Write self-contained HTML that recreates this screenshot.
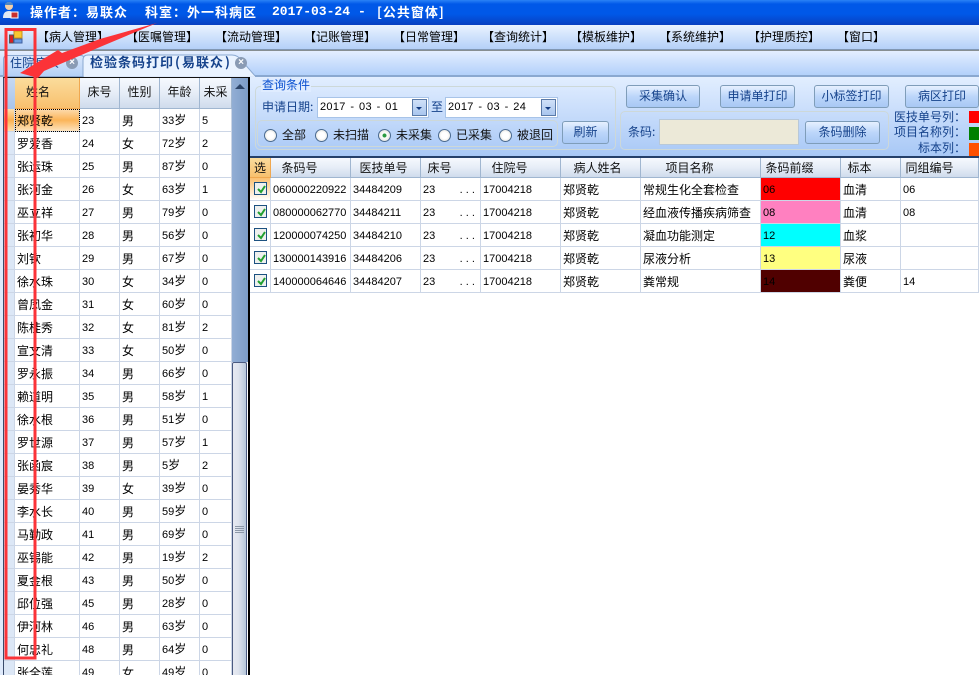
<!DOCTYPE html>
<html><head><meta charset="utf-8">
<style>
html,body{margin:0;padding:0;width:979px;height:675px;overflow:hidden}
#w{width:979px;height:675px;overflow:hidden;position:relative;background:#dfeafb;font:12px/14px "WenQuanYi Zen Hei","Noto Sans CJK SC",sans-serif;color:#000}
.a{position:absolute;white-space:nowrap}
.m{color:#000;top:30px;font-size:12px}
.t{color:#fff;font-size:13px;font-weight:bold;top:5px;letter-spacing:1px}
.b{color:#15428b;font-size:13px;font-weight:bold;top:55px;letter-spacing:1px}
.l{color:#15428b}
.btn{position:absolute;box-sizing:border-box;border:1px solid #7f9db9;border-radius:3px;background:linear-gradient(#e6f0ff,#bcd6fa 50%,#a8c8f4);color:#15428b;text-align:center;font-size:12px;line-height:20px}
.rd{position:absolute;box-sizing:border-box;width:13px;height:13px;border-radius:50%;border:1px solid #4a6a90;background:radial-gradient(#fff 40%,#d8d8d0);top:129px}
.ip{position:absolute;box-sizing:border-box;background:#fff;border:1px solid #a8c4e8;height:21px;top:97px;line-height:18px;padding-left:2px;font:11px/18px "Liberation Sans",sans-serif;letter-spacing:.3px;word-spacing:-1px;white-space:pre}
.dd{position:absolute;box-sizing:border-box;top:99px;width:15px;height:17px;background:linear-gradient(#cfe0f8,#a9c6ee);border:1px solid #5a7aa8}
.dd:after{content:"";position:absolute;left:3px;top:7px;border:3px solid transparent;border-top:3px solid #123a80;border-bottom:0}
table{position:absolute;border-collapse:separate;border-spacing:0;table-layout:fixed;background:#fff}
td{box-sizing:border-box;height:23px;padding:1px 0 0 2px;border-right:1px solid #ccd6e6;border-bottom:1px solid #ccd6e6;white-space:nowrap;overflow:hidden;font:11px/14px "Liberation Sans","WenQuanYi Zen Hei",sans-serif;vertical-align:middle}
td.c,td i{font:normal 12px/14px "WenQuanYi Zen Hei","Noto Sans CJK SC",sans-serif}
.h{position:absolute;box-sizing:border-box;background:linear-gradient(#f6f9fe,#e6edf7 50%,#cfdbec);border-right:1px solid #a0b6d0;border-bottom:1px solid #a0b6d0;text-align:center;font-size:12px;line-height:20px;color:#111}
.or{background:linear-gradient(#fbdc9c,#f8c06e);border-right:1px solid #f0a850;border-bottom:1px solid #f0a850}
.rh{background:#dce7f6!important;padding:0}
.cb{position:absolute;left:254px;box-sizing:border-box;width:13px;height:13px;border:1px solid #1c5180;background:#eef0ee}
.cb svg{position:absolute;left:1px;top:1px}
.x{position:absolute;width:12px;height:12px;border-radius:50%;background:#8a9bb4;color:#fff;font:bold 10px/12px "Liberation Sans",sans-serif;text-align:center}
</style></head><body><div id="w">

<div class="a" style="left:0;top:0;width:979px;height:25px;background:linear-gradient(#2a82f6 0,#0058e8 4px,#0058e8 14px,#0840c0 25px)"></div>
<svg class="a" style="left:2px;top:1px" width="17" height="18" viewBox="0 0 17 18"><circle cx="7" cy="5" r="4" fill="#f3cfa8"/><path d="M3 3q4-4 8 0v1H3z" fill="#4a86c8"/><path d="M1 17q0-7 6-7t6 7z" fill="#dfe8f4"/><rect x="9" y="11" width="7" height="6" fill="#c83030" stroke="#fff"/></svg>
<div class="a t" style="left:30px">操作者：易联众</div>
<div class="a t" style="left:145px">科室：外一科病区</div>
<div class="a t" style="left:272px;font-family:'Liberation Mono',monospace;letter-spacing:0">2017-03-24</div>
<div class="a t" style="left:358px;font-family:'Liberation Mono',monospace">-</div>
<div class="a t" style="left:377px">[公共窗体]</div>

<div class="a" style="left:0;top:25px;width:979px;height:24px;background:linear-gradient(#eaf3ff,#b4d0f8)"></div>
<div class="a" style="left:0;top:49px;width:979px;height:2px;background:linear-gradient(#7e9cc4,#8a8a80)"></div>
<svg class="a" style="left:9px;top:30px" width="14" height="14" viewBox="0 0 14 14"><rect x="5" y="1" width="8" height="7" fill="#f8c830" stroke="#c89020"/><rect x="0.5" y="5" width="4" height="8" fill="#d82020" stroke="#555"/><rect x="5" y="9" width="8" height="4" fill="#6a9ae0" stroke="#4060a0"/></svg>
<div class="a m" style="left:37px">【病人管理】</div>
<div class="a m" style="left:126px">【医嘱管理】</div>
<div class="a m" style="left:215px">【流动管理】</div>
<div class="a m" style="left:304px">【记账管理】</div>
<div class="a m" style="left:393px">【日常管理】</div>
<div class="a m" style="left:482px">【查询统计】</div>
<div class="a m" style="left:570px">【模板维护】</div>
<div class="a m" style="left:659px">【系统维护】</div>
<div class="a m" style="left:748px">【护理质控】</div>
<div class="a m" style="left:837px">【窗口】</div>

<div class="a" style="left:0;top:51px;width:979px;height:25px;background:linear-gradient(#e4eeff,#b0cffa)"></div>
<div class="a" style="left:0;top:75px;width:979px;height:2px;background:#8aa8d0"></div>
<div class="a" style="left:3px;top:55px;width:82px;height:21px;box-sizing:border-box;background:linear-gradient(#d8e6fb,#b4d0f6);border:1px solid #8aa8d0;border-bottom:0;border-radius:4px 4px 0 0"></div>
<div class="a" style="left:10px;top:56px;color:#15428b;font-size:12px;letter-spacing:.3px">住院病人</div>
<div class="x" style="left:66px;top:57px">×</div>
<svg class="a" style="left:82px;top:54px" width="178" height="24" viewBox="0 0 178 24"><path d="M1 23V6Q1 1 6 1H150Q156 1 160 7L174 23Z" fill="#eaf3ff" stroke="#8aa8d0"/><path d="M2 22H173V24H2z" fill="#dfeafb"/></svg>
<div class="a b" style="left:90px">检验条码打印</div>
<div class="a b" style="left:175px">(</div>
<div class="a b" style="left:182px">易联众</div>
<div class="a b" style="left:225px">)</div>
<div class="x" style="left:235px;top:57px">×</div>

<!-- left grid -->
<div class="a" style="left:3px;top:77px;width:247px;height:598px;background:#fff;box-sizing:border-box;border-top:1px solid #111;border-left:1px solid #3a4a6a"></div>
<div class="a" style="left:248px;top:77px;width:2px;height:598px;background:#000"></div>
<div class="a" style="left:4px;top:78px;width:11px;height:31px;background:linear-gradient(#c6d9f2,#a8c4ea)"></div>
<div class="h or" style="left:15px;top:78px;width:65px;height:31px;line-height:28px;padding-right:18px">姓名</div>
<div class="h" style="left:80px;top:78px;width:40px;height:31px;line-height:28px">床号</div>
<div class="h" style="left:120px;top:78px;width:40px;height:31px;line-height:28px">性别</div>
<div class="h" style="left:160px;top:78px;width:40px;height:31px;line-height:28px">年龄</div>
<div class="h" style="left:200px;top:78px;width:32px;height:31px;line-height:28px;overflow:hidden">未采</div>

<table style="left:4px;top:109px;width:228px">
<colgroup><col style="width:11px"><col style="width:65px"><col style="width:40px"><col style="width:40px"><col style="width:40px"><col style="width:32px"></colgroup>
<tr><td class="rh" style="background:linear-gradient(#fde0b0,#fbb050,#fde0b0)!important"></td><td class="c" style="background:linear-gradient(#fddcb0,#fbb458,#fde4c0);outline:1px dotted #000;outline-offset:-1px">郑贤乾</td><td>23</td><td class="c">男</td><td>33<i>岁</i></td><td>5</td></tr>
<tr><td class="rh"></td><td class="c">罗爱香</td><td>24</td><td class="c">女</td><td>72<i>岁</i></td><td>2</td></tr>
<tr><td class="rh"></td><td class="c">张运珠</td><td>25</td><td class="c">男</td><td>87<i>岁</i></td><td>0</td></tr>
<tr><td class="rh"></td><td class="c">张河金</td><td>26</td><td class="c">女</td><td>63<i>岁</i></td><td>1</td></tr>
<tr><td class="rh"></td><td class="c">巫立祥</td><td>27</td><td class="c">男</td><td>79<i>岁</i></td><td>0</td></tr>
<tr><td class="rh"></td><td class="c">张初华</td><td>28</td><td class="c">男</td><td>56<i>岁</i></td><td>0</td></tr>
<tr><td class="rh"></td><td class="c">刘钦</td><td>29</td><td class="c">男</td><td>67<i>岁</i></td><td>0</td></tr>
<tr><td class="rh"></td><td class="c">徐水珠</td><td>30</td><td class="c">女</td><td>34<i>岁</i></td><td>0</td></tr>
<tr><td class="rh"></td><td class="c">曾凤金</td><td>31</td><td class="c">女</td><td>60<i>岁</i></td><td>0</td></tr>
<tr><td class="rh"></td><td class="c">陈桂秀</td><td>32</td><td class="c">女</td><td>81<i>岁</i></td><td>2</td></tr>
<tr><td class="rh"></td><td class="c">宣文清</td><td>33</td><td class="c">女</td><td>50<i>岁</i></td><td>0</td></tr>
<tr><td class="rh"></td><td class="c">罗永振</td><td>34</td><td class="c">男</td><td>66<i>岁</i></td><td>0</td></tr>
<tr><td class="rh"></td><td class="c">赖道明</td><td>35</td><td class="c">男</td><td>58<i>岁</i></td><td>1</td></tr>
<tr><td class="rh"></td><td class="c">徐水根</td><td>36</td><td class="c">男</td><td>51<i>岁</i></td><td>0</td></tr>
<tr><td class="rh"></td><td class="c">罗世源</td><td>37</td><td class="c">男</td><td>57<i>岁</i></td><td>1</td></tr>
<tr><td class="rh"></td><td class="c">张函宸</td><td>38</td><td class="c">男</td><td>5<i>岁</i></td><td>2</td></tr>
<tr><td class="rh"></td><td class="c">晏秀华</td><td>39</td><td class="c">女</td><td>39<i>岁</i></td><td>0</td></tr>
<tr><td class="rh"></td><td class="c">李水长</td><td>40</td><td class="c">男</td><td>59<i>岁</i></td><td>0</td></tr>
<tr><td class="rh"></td><td class="c">马勤政</td><td>41</td><td class="c">男</td><td>69<i>岁</i></td><td>0</td></tr>
<tr><td class="rh"></td><td class="c">巫锡能</td><td>42</td><td class="c">男</td><td>19<i>岁</i></td><td>2</td></tr>
<tr><td class="rh"></td><td class="c">夏金根</td><td>43</td><td class="c">男</td><td>50<i>岁</i></td><td>0</td></tr>
<tr><td class="rh"></td><td class="c">邱位强</td><td>45</td><td class="c">男</td><td>28<i>岁</i></td><td>0</td></tr>
<tr><td class="rh"></td><td class="c">伊河林</td><td>46</td><td class="c">男</td><td>63<i>岁</i></td><td>0</td></tr>
<tr><td class="rh"></td><td class="c">何忠礼</td><td>48</td><td class="c">男</td><td>64<i>岁</i></td><td>0</td></tr>
<tr><td class="rh"></td><td class="c">张全莲</td><td>49</td><td class="c">女</td><td>49<i>岁</i></td><td>0</td></tr>
</table>

<!-- scrollbar -->
<div class="a" style="left:232px;top:78px;width:16px;height:284px;background:linear-gradient(90deg,#92aed4,#7c9cc8)"></div>
<div class="a" style="left:235px;top:84px;border:5px solid transparent;border-bottom:5px solid #2c4468;border-top:0"></div>
<div class="a" style="left:232px;top:362px;width:15px;height:313px;box-sizing:border-box;border:1px solid #4a5a80;border-bottom:0;border-radius:2px 2px 0 0;background:linear-gradient(90deg,#e6e9f1 0,#dfe4ee 40%,#b6c6da 100%)"></div>
<div class="a" style="left:235px;top:526px;width:9px;height:7px;background:repeating-linear-gradient(#8c98a8 0,#8c98a8 1px,transparent 1px,transparent 2px)"></div>

<!-- query panel -->
<div class="a" style="left:250px;top:77px;width:729px;height:79px;background:linear-gradient(#e2eeff,#a8c8f6)"></div>
<div class="a" style="left:250px;top:156px;width:729px;height:2px;background:#25406a"></div>
<div class="a" style="left:255px;top:86px;width:361px;height:64px;box-sizing:border-box;border:1px solid #cdd8d8;border-radius:5px"></div>
<div class="a" style="left:261px;top:78px;color:#0a50d0;font-size:12px;background:#dfecff;padding:0 1px;letter-spacing:0">查询条件</div>
<div class="a l" style="left:262px;top:100px">申请日期:</div>
<div class="ip" style="left:317px;width:112px">2017  -  03  -  01</div><div class="dd" style="left:412px"></div>
<div class="a l" style="left:431px;top:100px">至</div>
<div class="ip" style="left:445px;width:113px">2017  -  03  -  24</div><div class="dd" style="left:541px"></div>
<div class="a" style="left:257px;top:120px;width:301px;height:27px;box-sizing:border-box;border:1px solid #cdd8d8;border-radius:5px"></div>
<div class="rd" style="left:264px"></div><div class="a l" style="left:282px;top:128px;color:#111">全部</div>
<div class="rd" style="left:315px"></div><div class="a l" style="left:333px;top:128px;color:#111">未扫描</div>
<div class="rd" style="left:378px;background:radial-gradient(#2a9a40 22%,#fff 30%,#d8d8d0)"></div><div class="a l" style="left:396px;top:128px;color:#111">未采集</div>
<div class="rd" style="left:438px"></div><div class="a l" style="left:456px;top:128px;color:#111">已采集</div>
<div class="rd" style="left:499px"></div><div class="a l" style="left:517px;top:128px;color:#111">被退回</div>
<div class="btn" style="left:562px;top:121px;width:47px;height:23px">刷新</div>

<div class="btn" style="left:626px;top:85px;width:74px;height:23px">采集确认</div>
<div class="btn" style="left:720px;top:85px;width:75px;height:23px">申请单打印</div>
<div class="btn" style="left:814px;top:85px;width:75px;height:23px">小标签打印</div>
<div class="btn" style="left:905px;top:85px;width:74px;height:23px">病区打印</div>
<div class="a" style="left:620px;top:111px;width:269px;height:39px;box-sizing:border-box;border:1px solid #cdd8d8;border-radius:5px"></div>
<div class="a l" style="left:628px;top:125px">条码:</div>
<div class="a" style="left:659px;top:119px;width:140px;height:26px;box-sizing:border-box;background:#ece9d8;border:1px solid #b8c8d8"></div>
<div class="btn" style="left:805px;top:121px;width:75px;height:23px">条码删除</div>
<div class="a l" style="left:894px;top:110px">医技单号列：</div>
<div class="a l" style="left:894px;top:125px">项目名称列：</div>
<div class="a l" style="left:918px;top:141px">标本列：</div>
<div class="a" style="left:969px;top:111px;width:10px;height:12px;background:#f00"></div>
<div class="a" style="left:969px;top:127px;width:10px;height:13px;background:#008000"></div>
<div class="a" style="left:969px;top:143px;width:10px;height:13px;background:#ff5000"></div>

<!-- right grid -->
<div class="a" style="left:250px;top:158px;width:729px;height:517px;background:#fff"></div>
<div class="h or" style="left:250px;top:158px;width:21px;height:20px">选</div>
<div class="h" style="left:271px;top:158px;width:80px;height:20px;padding-right:22px">条码号</div>
<div class="h" style="left:351px;top:158px;width:70px;height:20px;padding-right:4px">医技单号</div>
<div class="h" style="left:421px;top:158px;width:60px;height:20px;padding-right:22px">床号</div>
<div class="h" style="left:481px;top:158px;width:80px;height:20px;padding-right:22px">住院号</div>
<div class="h" style="left:561px;top:158px;width:80px;height:20px;padding-right:6px">病人姓名</div>
<div class="h" style="left:641px;top:158px;width:120px;height:20px;padding-right:22px">项目名称</div>
<div class="h" style="left:761px;top:158px;width:80px;height:20px;padding-right:22px">条码前缀</div>
<div class="h" style="left:841px;top:158px;width:60px;height:20px;padding-right:22px">标本</div>
<div class="h" style="left:901px;top:158px;width:78px;height:20px;padding-right:20px">同组编号</div>

<table style="left:250px;top:178px;width:729px">
<colgroup><col style="width:21px"><col style="width:80px"><col style="width:70px"><col style="width:60px"><col style="width:80px"><col style="width:80px"><col style="width:120px"><col style="width:80px"><col style="width:60px"><col style="width:78px"></colgroup>
<tr><td style="background:linear-gradient(#fbc070,#fff)"></td><td>060000220922</td><td>34484209</td><td>23 &nbsp; &nbsp; &nbsp; &nbsp;. . .</td><td>17004218</td><td class="c">郑贤乾</td><td class="c">常规生化全套检查</td><td style="background:#f00">06</td><td class="c">血清</td><td>06</td></tr>
<tr><td></td><td>080000062770</td><td>34484211</td><td>23 &nbsp; &nbsp; &nbsp; &nbsp;. . .</td><td>17004218</td><td class="c">郑贤乾</td><td class="c">经血液传播疾病筛查</td><td style="background:#ff80c0">08</td><td class="c">血清</td><td>08</td></tr>
<tr><td></td><td>120000074250</td><td>34484210</td><td>23 &nbsp; &nbsp; &nbsp; &nbsp;. . .</td><td>17004218</td><td class="c">郑贤乾</td><td class="c">凝血功能测定</td><td style="background:#0ff">12</td><td class="c">血浆</td><td></td></tr>
<tr><td></td><td>130000143916</td><td>34484206</td><td>23 &nbsp; &nbsp; &nbsp; &nbsp;. . .</td><td>17004218</td><td class="c">郑贤乾</td><td class="c">尿液分析</td><td style="background:#ffff80">13</td><td class="c">尿液</td><td></td></tr>
<tr><td></td><td>140000064646</td><td>34484207</td><td>23 &nbsp; &nbsp; &nbsp; &nbsp;. . .</td><td>17004218</td><td class="c">郑贤乾</td><td class="c">粪常规</td><td style="background:#500000">14</td><td class="c">粪便</td><td>14</td></tr>
</table>
<div class="cb" style="top:182px"><svg width="11" height="11" viewBox="0 0 11 11"><path d="M2 5l3 3 4-6" fill="none" stroke="#22a030" stroke-width="2"/></svg></div>
<div class="cb" style="top:205px"><svg width="11" height="11" viewBox="0 0 11 11"><path d="M2 5l3 3 4-6" fill="none" stroke="#22a030" stroke-width="2"/></svg></div>
<div class="cb" style="top:228px"><svg width="11" height="11" viewBox="0 0 11 11"><path d="M2 5l3 3 4-6" fill="none" stroke="#22a030" stroke-width="2"/></svg></div>
<div class="cb" style="top:251px"><svg width="11" height="11" viewBox="0 0 11 11"><path d="M2 5l3 3 4-6" fill="none" stroke="#22a030" stroke-width="2"/></svg></div>
<div class="cb" style="top:274px"><svg width="11" height="11" viewBox="0 0 11 11"><path d="M2 5l3 3 4-6" fill="none" stroke="#22a030" stroke-width="2"/></svg></div>

<!-- red annotations -->
<svg class="a" style="left:0;top:0" width="260" height="675" viewBox="0 0 260 675">
<path d="M6 29.500H35V658H6Z" fill="none" stroke="#fb3338" stroke-width="3"/>
<path d="M157 23L100 39 62 53 58 50 20 73 38 78 44 71 100 47Z" fill="#fb3338"/>
</svg>
</div></body></html>
